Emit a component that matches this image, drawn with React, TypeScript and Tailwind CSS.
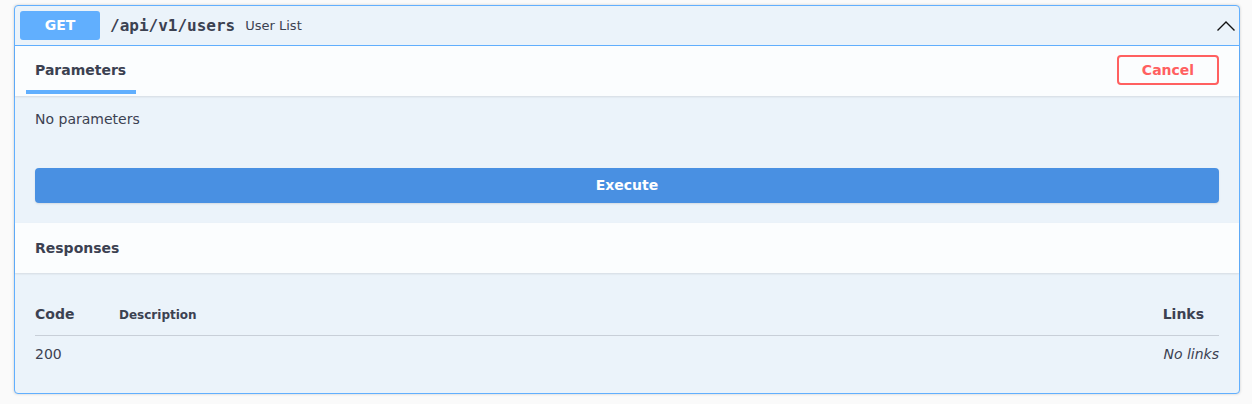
import React from 'react';

const sans = "font-['DejaVu_Sans','Liberation_Sans',sans-serif]";
const mono = "font-['DejaVu_Sans_Mono','Liberation_Mono',monospace]";

const App: React.FC = () => {
    return (
        <div className={`min-h-[404px] bg-[#fafafa] pt-[5px] pl-[14px] pr-[12px] ${sans} text-[#3b4151]`}>
            <div className="rounded-[4px] border border-[#61affe] bg-[#ebf3fa] shadow-[0_0_3px_rgba(0,0,0,0.19)]">
                {/* summary */}
                <div className="flex h-[40px] items-center border-b border-[#61affe] px-[5px]">
                    <span className="flex h-[29px] w-[80px] items-center justify-center rounded-[3px] bg-[#61affe] text-[14px] font-bold text-white">
                        GET
                    </span>
                    <span className={`px-[10px] text-[16px] font-bold ${mono}`}>/api/v1/users</span>
                    <span className="text-[13px]">User List</span>
                    <div className="flex-1" />
                    <svg width="20" height="20" viewBox="0 0 20 20" className="-mr-[2px]">
                        <polyline points="1.5,14.5 10,6 18.5,14.5" fill="none" stroke="#111" strokeWidth="1.4" />
                    </svg>
                </div>

                {/* parameters header */}
                <div className="flex h-[50px] items-center justify-between bg-white/80 px-[20px] shadow-[0_1px_2px_rgba(0,0,0,0.1)]">
                    <div className="relative mb-[2px]">
                        <h4 className="text-[14px] font-bold">Parameters</h4>
                        <span className="absolute left-[-9px] top-[30px] h-[4px] w-[110px] bg-[#61affe]" />
                    </div>
                    <button className="mb-[2px] h-[30px] w-[102px] rounded-[4px] border-2 border-[#ff6060] text-[14px] font-bold text-[#ff6060]">
                        Cancel
                    </button>
                </div>

                <div className="px-[20px] pt-[13px] text-[14px]">No parameters</div>

                <div className="px-[20px] pt-[38px] pb-[20px]">
                    <button className="h-[35px] w-full rounded-[4px] bg-[#4990e2] text-[14px] font-bold text-white shadow-[0_1px_2px_rgba(0,0,0,0.1)]">
                        Execute
                    </button>
                </div>

                {/* responses header */}
                <div className="flex h-[50px] items-center bg-white/80 px-[20px] shadow-[0_1px_2px_rgba(0,0,0,0.1)]">
                    <h4 className="text-[14px] font-bold">Responses</h4>
                </div>

                <div className="px-[20px] pt-[33px] pb-[21px]">
                    <div className="flex h-[30px] items-start border-b border-[#3b4151]/20">
                        <span className="w-[84px] text-[14px] font-bold leading-[17px]">Code</span>
                        <span className="flex-1 pt-[2px] text-[12px] font-bold leading-[15px]">Description</span>
                        <span className="pr-[15px] text-[14px] font-bold leading-[17px]">Links</span>
                    </div>
                    <div className="flex h-[36px] items-center text-[14px]">
                        <span className="w-[84px]">200</span>
                        <span className="flex-1" />
                        <span className="italic">No links</span>
                    </div>
                </div>
            </div>
        </div>
    );
};

export default App;
